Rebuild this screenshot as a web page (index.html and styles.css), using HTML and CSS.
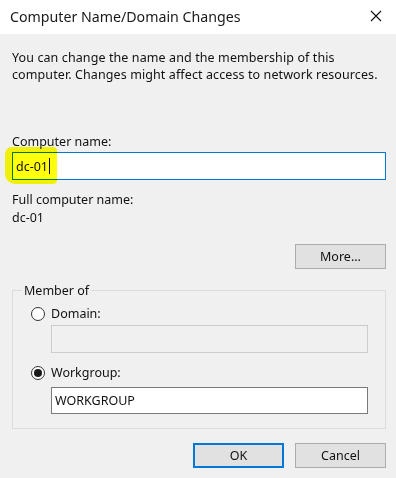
FILE: index.html
```html
<!DOCTYPE html>
<html>
<head>
<meta charset="utf-8">
<link rel="stylesheet" href="styles.css">
</head>
<body>
<div class="dialog">
  <div class="titlebar">
    <span class="title">Computer Name/Domain Changes</span>
    <svg class="close" width="12" height="12" viewBox="0 0 12 12"><path d="M1 1 L11 11 M11 1 L1 11" stroke="#111" stroke-width="1.1" fill="none"/></svg>
  </div>
  <div class="content">
    <p class="intro">You can change the name and the membership of this<br>computer. Changes might affect access to network resources.</p>
    <div class="label label-name">Computer name:</div>
    <div class="field-wrap">
      <div class="textbox focused"><span class="val">dc-01</span><span class="caret"></span></div>
      <div class="highlight"></div>
    </div>
    <div class="label label-full">Full computer name:</div>
    <div class="label label-fullval">dc-01</div>
    <div class="row-right more-row">
      <div class="btn">More...</div>
    </div>
    <fieldset class="group">
      <legend>Member of</legend>
      <div class="group-inner">
        <div class="radio-row"><span class="radio"></span><span>Domain:</span></div>
        <div class="textbox disabled domain-box"></div>
        <div class="radio-row wg-row"><span class="radio checked"></span><span>Workgroup:</span></div>
        <div class="textbox wg-box"><span class="val">WORKGROUP</span></div>
      </div>
    </fieldset>
    <div class="row-right buttons">
      <div class="btn default">OK</div>
      <div class="btn">Cancel</div>
    </div>
  </div>
</div>
</body>
</html>
```
FILE: styles.css
```css
* { box-sizing: border-box; }
html, body { margin: 0; padding: 0; }
body {
  width: 396px;
  height: 478px;
  overflow: hidden;
  font-family: "Noto Sans", "Open Sans", sans-serif;
  color: #111;
  background: #f0f0f0;
}
.dialog { width: 396px; height: 478px; display: flex; flex-direction: column; }
.titlebar {
  height: 34px;
  background: #fff;
  display: flex;
  align-items: center;
  justify-content: space-between;
  padding: 0 14px 2px 10px;
}
.title { font-size: 14.2px; color: #1a1a1a; }
.close { display: block; }
.content {
  flex: 1;
  background: #f0f0f0;
  padding: 15px 10px 0 12px;
  font-size: 12.5px;
  line-height: 17px;
}
.intro { margin: 0; white-space: nowrap; letter-spacing: 0.1px; }
.label { line-height: 17px; }
.label-name { margin-top: 50px; }
.field-wrap { position: relative; margin-top: 2px; }
.textbox {
  height: 28px;
  border: 1px solid #7a7a7a;
  background: #fff;
  display: flex;
  align-items: center;
  padding-left: 3px;
}
.textbox.focused { border-color: #0078d7; }
.caret { display: inline-block; width: 1px; height: 16px; background: #000; margin-left: 1px; }
.highlight {
  position: absolute;
  left: -7px;
  top: -5px;
  width: 52px;
  height: 37px;
  background: #ffff00;
  border-radius: 7px 4px 4px 10px;
  mix-blend-mode: multiply;
  opacity: 0.95;
}
.label-full { margin-top: 11px; }
.label-fullval { margin-top: 1px; }
.row-right { display: flex; justify-content: flex-end; gap: 11px; }
.more-row { margin-top: 18px; }
.btn {
  width: 91px;
  height: 25px;
  border: 1px solid #adadad;
  background: #e1e1e1;
  display: flex;
  align-items: center;
  justify-content: center;
}
.btn.default { border: 2px solid #0078d7; }
.group {
  margin: 13px 0 0 0;
  padding: 0 17px 14px 0;
  border: 1px solid #dcdcdc;
  min-width: 0;
}
.group legend {
  margin-left: 9px;
  padding: 0 2px;
  line-height: 17px;
}
.group-inner { padding: 6px 0 0 18px; }
.radio-row { display: flex; align-items: flex-start; gap: 6px; line-height: 17px; }
.radio {
  width: 14px;
  height: 14px;
  margin-top: 2px;
  border: 1px solid #333;
  border-radius: 50%;
  background: #fff;
  display: flex;
  align-items: center;
  justify-content: center;
}
.radio.checked::after {
  content: "";
  width: 8px;
  height: 8px;
  border-radius: 50%;
  background: #1a1a1a;
}
.domain-box { margin: 3px 0 0 20px; border-color: #cccccc; background: #f0f0f0; }
.wg-row { margin-top: 11px; }
.wg-box { margin: 6px 0 0 20px; height: 27px; }
.buttons { margin-top: 14px; }
```
